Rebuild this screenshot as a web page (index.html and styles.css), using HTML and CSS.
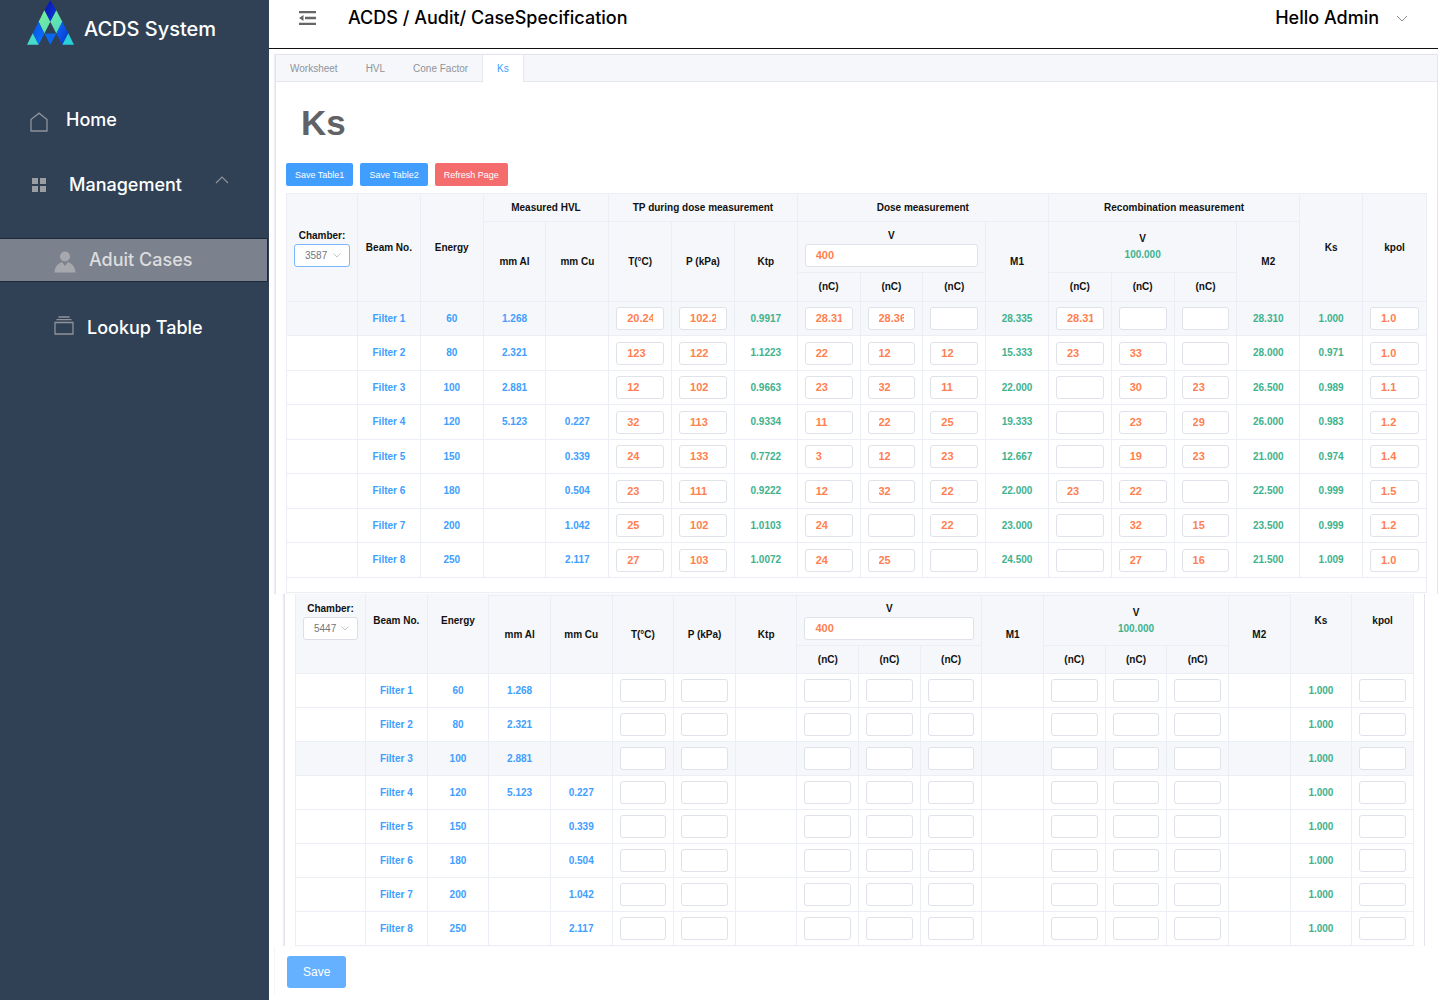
FILE: index.html
```html
<!DOCTYPE html>
<html lang="en">
<head>
<meta charset="utf-8">
<title>ACDS System</title>
<link rel="stylesheet" href="styles.css">
</head>
<body>
<div class="app">
  <aside class="sidebar">
    <div class="brand">
      <svg class="brand-logo" viewBox="0 0 141 134" aria-hidden="true">
        <defs>
          <linearGradient id="deep" x1="0" y1="0" x2="1" y2="1"><stop offset="0" stop-color="#0a12a8"/><stop offset="1" stop-color="#0a3be0"/></linearGradient>
          <linearGradient id="blue" x1="0" y1="0" x2="1" y2="1"><stop offset="0" stop-color="#0a4fe6"/><stop offset="1" stop-color="#0a78ff"/></linearGradient>
          <linearGradient id="blue2" x1="0" y1="0" x2="1" y2="1"><stop offset="0" stop-color="#0a70ff"/><stop offset="1" stop-color="#0a30c8"/></linearGradient>
          <linearGradient id="mint" x1="0" y1="0" x2="1" y2="1"><stop offset="0" stop-color="#7af09c"/><stop offset="1" stop-color="#4fd8c0"/></linearGradient>
        </defs>
        <path fill="url(#deep)" d="M70 0 88 30 70 65 52 30z"/>
        <path fill="url(#mint)" d="M52 30 70 65 52 100 35 65zM88 30 106 65 88 100 70 65z"/>
        <path fill="url(#blue)" d="M35 65 52 100 35 134 17 99z"/>
        <path fill="url(#blue2)" d="M106 65 124 99 106 134 88 100z"/>
        <path fill="#0a68f0" d="M52 100H88L70 134z"/>
        <path fill="#45dccb" d="M17 99 35 134H0z"/>
        <path fill="#28d0dc" d="M124 99 141 134H106z"/>
      </svg>
      <span>ACDS System</span>
    </div>
    <nav class="menu">
      <a class="menu-item menu-home" href="#home">
        <svg width="18" height="24" viewBox="0 -4 18 24" fill="none" stroke="#8f939b" stroke-width="1.3" aria-hidden="true"><path d="M1 7.500 9 1.200 17 7.500V19H1z"/></svg>
        <span>Home</span>
      </a>
      <a class="menu-item menu-management" href="#management">
        <svg width="14" height="14" viewBox="0 0 14 14" fill="#9b9da3" aria-hidden="true"><path d="M0 0h6v6H0zM8 0h6v6H8zM0 8h6v6H0zM8 8h6v6H8z"/></svg>
        <span>Management</span>
        <svg class="menu-caret" width="14" height="8" viewBox="0 0 14 8" fill="none" stroke="#8f939b" stroke-width="1.200" aria-hidden="true"><path d="M1 7 7 1 13 7"/></svg>
      </a>
      <a class="menu-item menu-audit" href="#cases" aria-current="page">
        <svg width="22" height="26" viewBox="0 -4 22 26" fill="#a6a8ad" aria-hidden="true"><circle cx="11" cy="5.500" r="5"/><path d="M.5 21.500C.8 15.500 4 12.500 8 11L11 15 14 11C18 12.500 21.200 15.500 21.500 21.500z"/></svg>
        <span>Aduit Cases</span>
      </a>
      <a class="menu-item menu-lookup" href="#lookup">
        <svg width="20" height="24" viewBox="0 0 20 24" fill="none" stroke="#8f939b" stroke-width="1.300" aria-hidden="true"><path d="M1 6.500H19V18H1zM2.500 3.600H17.500M4.500 1H15.500"/></svg>
        <span>Lookup Table</span>
      </a>
    </nav>
  </aside>

  <main class="main">
    <header class="topbar">
      <button class="icon-button" type="button" aria-label="Collapse menu">
        <svg width="17" height="14" viewBox="0 0 17 14" fill="#666" aria-hidden="true"><path d="M0 0H17V2.300H0zM6 5.800H17V8.200H6zM0 11.700H17V14H0zM4.500 4V10L0 7z"/></svg>
      </button>
      <div class="crumbs">ACDS / Audit/ CaseSpecification</div>
      <button class="user" type="button">
        <span>Hello Admin</span>
        <svg width="12" height="7" viewBox="0 0 12 7" fill="none" stroke="#8a8d94" aria-hidden="true"><path d="M1 1 6 6 11 1"/></svg>
      </button>
    </header>

    <section class="card">
      <nav class="tabs">
        <a class="tab" href="#worksheet">Worksheet</a>
        <a class="tab" href="#hvl">HVL</a>
        <a class="tab" href="#cone">Cone Factor</a>
        <a class="tab tab-active" href="#ks" aria-current="page">Ks</a>
      </nav>
      <h1 class="title">Ks</h1>
      <div class="actions">
        <button class="btn" type="button">Save Table1</button>
        <button class="btn" type="button">Save Table2</button>
        <button class="btn btn-danger" type="button">Refresh Page</button>
      </div>
      <div class="sheet-frame">
        <table class="sheet sheet-first">
          <colgroup><col class="col-chamber"><col span="17"></colgroup>
          <thead>
            <tr class="head-groups">
              <th rowspan="3">
                <label class="field-label" for="chamber1">Chamber:</label>
                <div class="select select-focus">
                  <select id="chamber1"><option>3587</option></select>
                  <svg width="8" height="5" viewBox="0 0 8 5" fill="none" stroke="#c0c4cc" aria-hidden="true"><path d="M.5.500 4 4 7.500.500"/></svg>
                </div>
              </th>
              <th rowspan="3">Beam No.</th><th rowspan="3">Energy</th>
              <th colspan="2">Measured HVL</th><th colspan="3">TP during dose measurement</th>
              <th colspan="4">Dose measurement</th><th colspan="4">Recombination measurement</th>
              <th rowspan="3">Ks</th><th class="col-last" rowspan="3">kpol</th>
            </tr>
            <tr class="head-columns">
              <th rowspan="2">mm Al</th><th rowspan="2">mm Cu</th>
              <th rowspan="2">T(°C)</th><th rowspan="2">P (kPa)</th><th rowspan="2">Ktp</th>
              <th colspan="3"><label class="field-label" for="volt1">V</label><input class="box" id="volt1" value="400"></th>
              <th rowspan="2">M1</th>
              <th colspan="3">V<div class="calc">100.000</div></th>
              <th rowspan="2">M2</th>
            </tr>
            <tr class="head-units"><th>(nC)</th><th>(nC)</th><th>(nC)</th><th>(nC)</th><th>(nC)</th><th>(nC)</th></tr>
          </thead>
          <tbody id="rows1"></tbody>
        </table>
      </div>
    </section>

    <section class="card card-second">
      <table class="sheet sheet-second">
        <colgroup><col class="col-chamber"><col span="17"></colgroup>
        <thead>
          <tr class="head-groups">
            <th rowspan="3">
              <label class="field-label" for="chamber2">Chamber:</label>
              <div class="select">
                <select id="chamber2"><option>5447</option></select>
                <svg width="8" height="5" viewBox="0 0 8 5" fill="none" stroke="#c0c4cc" aria-hidden="true"><path d="M.5.500 4 4 7.500.500"/></svg>
              </div>
            </th>
            <th rowspan="3">Beam No.</th><th rowspan="3">Energy</th>
            <td colspan="2"></td><td colspan="3"></td><td colspan="4"></td><td colspan="4"></td>
            <th rowspan="3">Ks</th><th rowspan="3">kpol</th>
          </tr>
          <tr class="head-columns">
            <th rowspan="2">mm Al</th><th rowspan="2">mm Cu</th>
            <th rowspan="2">T(°C)</th><th rowspan="2">P (kPa)</th><th rowspan="2">Ktp</th>
            <th colspan="3"><label class="field-label" for="volt2">V</label><input class="box" id="volt2" value="400"></th>
            <th rowspan="2">M1</th>
            <th colspan="3">V<div class="calc">100.000</div></th>
            <th rowspan="2">M2</th>
          </tr>
          <tr class="head-units"><th>(nC)</th><th>(nC)</th><th>(nC)</th><th>(nC)</th><th>(nC)</th><th>(nC)</th></tr>
        </thead>
        <tbody id="rows2"></tbody>
      </table>
    </section>

    <footer class="footer">
      <button class="btn btn-save" type="button">Save</button>
    </footer>
  </main>
</div>
<script src="script.js"></script>
</body>
</html>
```

FILE: styles.css
```css
* { box-sizing: border-box; }

body {
  margin: 0;
  background: #fff;
  color: #111;
  font: 10px/16px "Liberation Sans", Arial, sans-serif;
}

button, input, select { margin: 0; font-family: inherit; }
a { color: inherit; text-decoration: none; }
svg { display: block; flex: none; }

.app { display: flex; min-height: 100vh; }

/* Sidebar */
.sidebar {
  flex: none;
  width: 269px;
  background: #304156;
  color: #fff;
  font: 500 18px/24px Inter, sans-serif;
}
.brand {
  display: flex;
  gap: 10px;
  height: 58px;
  padding-left: 27px;
  font-size: 20px;
  line-height: 58px;
}
.brand-logo { width: 47px; height: 45px; }
.menu { padding-top: 40px; }
.menu-item { display: flex; align-items: center; height: 44px; }
.menu-home { gap: 18px; padding-left: 30px; }
.menu-management { gap: 23px; margin-top: 21px; padding-left: 32px; }
.menu-caret { align-self: flex-start; margin: 13px 0 0 10px; }
.menu-audit {
  gap: 13px;
  margin: 31px 1px 0 0;
  padding-left: 54px;
  border: 1px solid #1c2a3a;
  border-left: 0;
  background: #7c828d;
  color: #dcdddf;
}
.menu-lookup { gap: 13px; margin-top: 24px; padding-left: 54px; }

/* Top bar */
.main { flex: 1; min-width: 0; }
.topbar {
  display: flex;
  align-items: center;
  height: 49px;
  padding: 0 30px 12px;
  border-bottom: 1px solid #111;
  color: #000;
  font: 500 18px/24px Inter, sans-serif;
}
.icon-button { padding: 0; border: 0; background: none; }
.crumbs { flex: 1; padding-left: 32px; }
.user {
  display: flex;
  align-items: center;
  gap: 17px;
  padding: 0;
  border: 0;
  background: none;
  color: #000;
  font: inherit;
}

/* Cards and tabs */
.card {
  height: 540px;
  margin: 5px 0 0 6px;
  border: 1px solid #e2e5ec;
  border-bottom: 0;
  box-shadow: -1px 0 1px #eceef2;
}
.tabs {
  display: flex;
  height: 27px;
  border-bottom: 1px solid #e4e7ed;
  background: #f5f7fa;
  color: #909399;
  line-height: 27px;
}
.tab { padding: 0 14px; }
.tab-active {
  height: 27px;
  border: solid #e4e7ed;
  border-width: 0 1px;
  background: #fff;
  color: #409eff;
}
.title {
  margin: 20px 0 19px;
  padding-left: 25px;
  color: #606266;
  font-size: 35px;
  line-height: 42px;
}
.actions { display: flex; gap: 7px; padding-left: 10px; }
.btn {
  height: 23px;
  padding: 0 9px;
  border: 0;
  border-radius: 2px;
  background: #409eff;
  color: #fff;
  font-size: 9px;
}
.btn-danger { background: #f56c6c; }
.sheet-frame {
  height: 400px;
  margin: 7px 10px 0;
  border: 1px solid #ebeef5;
}

/* Measurement tables */
.sheet {
  width: 100%;
  table-layout: fixed;
  border-spacing: 0;
  text-align: center;
}
.sheet th, .sheet td {
  padding: 0 7px;
  border: solid #ebeef5;
  border-width: 0 1px 1px 0;
  font-weight: bold;
}
.sheet-first .col-last, .sheet-first tbody td:last-child { border-right: 0; }
.sheet thead { background: #f5f7fa; }
.sheet .row-current { background: #f5f7fa; }
.col-chamber { width: 71px; }
.head-groups { height: 28px; }
.head-columns { height: 51px; }
.head-units { height: 28px; }
.sheet-first .head-units { height: 29px; }
.sheet-first tbody tr:nth-child(odd) { height: 34px; }
.sheet-first tbody tr:nth-child(even) { height: 35px; }

.field-label { display: block; }
.measure { color: #409eff; }
.calc { color: #3eb28e; }
.box {
  display: block;
  width: 100%;
  height: 23px;
  padding: 0 10px 1px;
  border: 1px solid #dfe2e9;
  border-radius: 3px;
  background: #fff;
  color: #ff7f50;
  font-size: 11px;
  font-weight: bold;
}
.select {
  display: flex;
  align-items: center;
  height: 23px;
  padding-right: 8px;
  border: 1px solid #dcdfe6;
  border-radius: 3px;
  background: #fff;
}
.select-focus { border-color: #79b8ff; }
.select select {
  flex: 1;
  min-width: 0;
  height: 21px;
  padding: 0 0 0 10px;
  border: 0;
  background: none;
  color: #73767c;
  font-size: 10px;
  appearance: none;
}

.card-second {
  height: auto;
  margin: 0 13px 0 15px;
  padding: 0 10px;
  border-width: 0 1px;
}
.sheet-second { border-left: 1px solid #ebeef5; }
.sheet-second .col-chamber { width: 70px; }
.sheet-second .head-groups { height: 2px; }
.sheet-second .head-groups th { padding-bottom: 26px; }
.sheet-second .head-columns { height: 50px; }
.sheet-second tbody tr { height: 34px; }

.footer {
  height: 48px;
  margin-left: 5px;
  padding: 10px 12px;
  border-left: 1px solid #f4f5f8;
}
.btn-save {
  display: block;
  height: 32px;
  padding: 0 16px;
  border-radius: 3px;
  background: #66b1ff;
  font-size: 12px;
}
```

FILE: script.js
```js
// Column kinds after the chamber column: m = measured, i = input, c = calculated.
const kinds = 'mmmmiiciiiciiicci';

const beams = [
  ['60', '1.268', ''], ['80', '2.321', ''], ['100', '2.881', ''], ['120', '5.123', '0.227'],
  ['150', '', '0.339'], ['180', '', '0.504'], ['200', '', '1.042'], ['250', '', '2.117'],
];

// T, P, Ktp, three readings, M1, three readings, M2, Ks, kpol
const first = [
  '20.24,102.25,0.9917,28.31,28.36,,28.335,28.31,,,28.310,1.000,1.0',
  '123,122,1.1223,22,12,12,15.333,23,33,,28.000,0.971,1.0',
  '12,102,0.9663,23,32,11,22.000,,30,23,26.500,0.989,1.1',
  '32,113,0.9334,11,22,25,19.333,,23,29,26.000,0.983,1.2',
  '24,133,0.7722,3,12,23,12.667,,19,23,21.000,0.974,1.4',
  '23,111,0.9222,12,32,22,22.000,23,22,,22.500,0.999,1.5',
  '25,102,1.0103,24,,22,23.000,,32,15,23.500,0.999,1.2',
  '27,103,1.0072,24,25,,24.500,,27,16,21.500,1.009,1.0',
];
const second = beams.map(() => ',,,,,,,,,,,1.000,');

function fill(id, data, current) {
  const body = document.getElementById(id);
  data.forEach((line, r) => {
    const row = body.insertRow();
    if (r === current) row.className = 'row-current';
    row.insertCell();
    const values = ['Filter ' + (r + 1), ...beams[r], ...line.split(',')];
    values.forEach((value, c) => {
      const cell = row.insertCell();
      if (kinds[c] === 'i') {
        const input = document.createElement('input');
        input.className = 'box';
        input.value = value;
        input.setAttribute('aria-label', values[0] + ', column ' + (c + 2));
        cell.append(input);
      } else {
        cell.className = kinds[c] === 'm' ? 'measure' : 'calc';
        cell.textContent = value;
      }
    });
  });
}

fill('rows1', first, 0);
fill('rows2', second, 2);
```
